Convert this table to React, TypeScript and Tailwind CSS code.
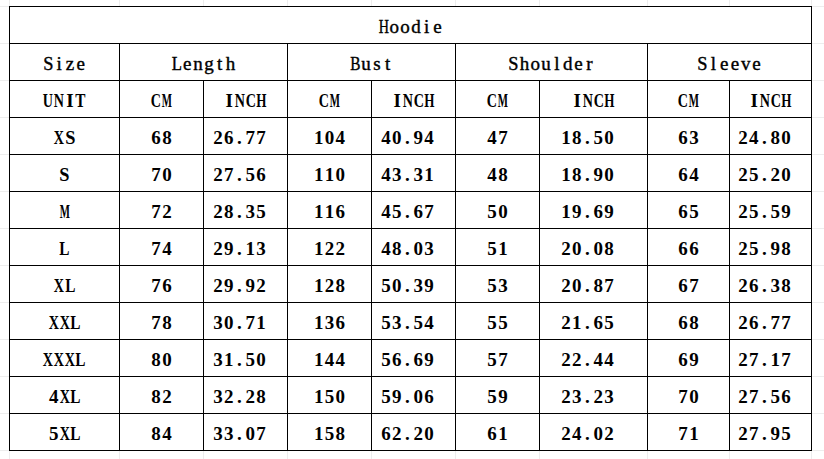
import React from "react";

const COLS = "grid-cols-[109px_83px_83px_83px_83px_83px_107px_81px_81px]";
const FS = 19;
const SLOT = 10.8;

// Approximate Times/Liberation Serif advance widths (em)
const REG: Record<string, number> = {
  H: 0.722, o: 0.5, d: 0.5, i: 0.278, e: 0.444, S: 0.556, z: 0.444, L: 0.611,
  n: 0.5, g: 0.5, t: 0.278, h: 0.5, B: 0.667, u: 0.5, s: 0.389, l: 0.278,
  r: 0.333, v: 0.5,
};
const BOLD: Record<string, number> = {
  U: 0.722, N: 0.722, I: 0.389, T: 0.667, C: 0.722, M: 0.944, X: 0.722,
  S: 0.556, L: 0.667, H: 0.778, ".": 0.25,
  "0": 0.5, "1": 0.5, "2": 0.5, "3": 0.5, "4": 0.5, "5": 0.5, "6": 0.5,
  "7": 0.5, "8": 0.5, "9": 0.5,
};

const rows: string[][] = [
  ["XS", "68", "26.77", "104", "40.94", "47", "18.50", "63", "24.80"],
  ["S", "70", "27.56", "110", "43.31", "48", "18.90", "64", "25.20"],
  ["M", "72", "28.35", "116", "45.67", "50", "19.69", "65", "25.59"],
  ["L", "74", "29.13", "122", "48.03", "51", "20.08", "66", "25.98"],
  ["XL", "76", "29.92", "128", "50.39", "53", "20.87", "67", "26.38"],
  ["XXL", "78", "30.71", "136", "53.54", "55", "21.65", "68", "26.77"],
  ["XXXL", "80", "31.50", "144", "56.69", "57", "22.44", "69", "27.17"],
  ["4XL", "82", "32.28", "150", "59.06", "59", "23.23", "70", "27.56"],
  ["5XL", "84", "33.07", "158", "62.20", "61", "24.02", "71", "27.95"],
];

function Mono({ text, bold }: { text: string; bold: boolean }) {
  return (
    <span className="inline-flex">
      {text.split("").map((ch, i) => {
        const w = ((bold ? BOLD[ch] : REG[ch]) ?? 0.5) * FS;
        const s = Math.min(1, (SLOT - 0.6) / w);
        return (
          <span key={i} className="inline-flex w-[10.8px] justify-center">
            <span className="inline-block shrink-0" style={{ transform: `scaleX(${s})` }}>
              {ch}
            </span>
          </span>
        );
      })}
    </span>
  );
}

function Cell({
  text,
  span = "",
  bold = false,
  inch = false,
}: {
  text: string;
  span?: string;
  bold?: boolean;
  inch?: boolean;
}) {
  return (
    <div
      className={`bg-white h-[36px] flex items-center justify-center pt-[3px] text-[19px] leading-none text-black whitespace-pre ${span} ${
        bold ? "font-bold" : "font-normal [-webkit-text-stroke:0.4px_black]"
      } ${inch ? "pr-[12px]" : ""}`}
    >
      <Mono text={text} bold={bold} />
    </div>
  );
}

function SideMargin() {
  return (
    <div className="flex flex-col gap-px py-px bg-[#ededed] flex-1 h-[445px]">
      {Array.from({ length: 12 }).map((_, i) => (
        <div key={i} className="bg-white h-[36px]" />
      ))}
    </div>
  );
}

function Strip({ h }: { h: string }) {
  return (
    <div className="flex">
      <div className="w-[9px] bg-white" />
      <div className={`grid ${COLS} gap-px px-px bg-[#ededed] ${h}`}>
        {Array.from({ length: 9 }).map((_, i) => (
          <div key={i} className="bg-white" />
        ))}
      </div>
      <div className="flex-1 bg-white" />
    </div>
  );
}

export default function App() {
  return (
    <div
      className="w-[824px] h-[459px] bg-white overflow-hidden flex flex-col"
      style={{ fontFamily: '"Liberation Serif", "Noto Sans CJK SC", serif' }}
    >
      <Strip h="h-[6px]" />
      <div className="flex">
        <div className="w-[9px] flex">
          <SideMargin />
        </div>
        <div className={`grid ${COLS} gap-px p-px bg-black`}>
          <Cell span="col-span-9" text="Hoodie" />
          <Cell text="Size" />
          <Cell span="col-span-2" text="Length" />
          <Cell span="col-span-2" text="Bust" />
          <Cell span="col-span-2" text="Shoulder" />
          <Cell span="col-span-2" text="Sleeve" />
          <Cell bold text="UNIT" />
          <Cell bold text="CM" />
          <Cell bold text="INCH" />
          <Cell bold text="CM" />
          <Cell bold text="INCH" />
          <Cell bold text="CM" />
          <Cell bold text="INCH" />
          <Cell bold text="CM" />
          <Cell bold text="INCH" />
          {rows.map((r) =>
            r.map((v, i) => (
              <Cell key={r[0] + i} bold inch={i > 0 && i % 2 === 0} text={v} />
            ))
          )}
        </div>
        <div className="flex-1 flex">
          <SideMargin />
        </div>
      </div>
      <Strip h="h-[8px]" />
    </div>
  );
}
